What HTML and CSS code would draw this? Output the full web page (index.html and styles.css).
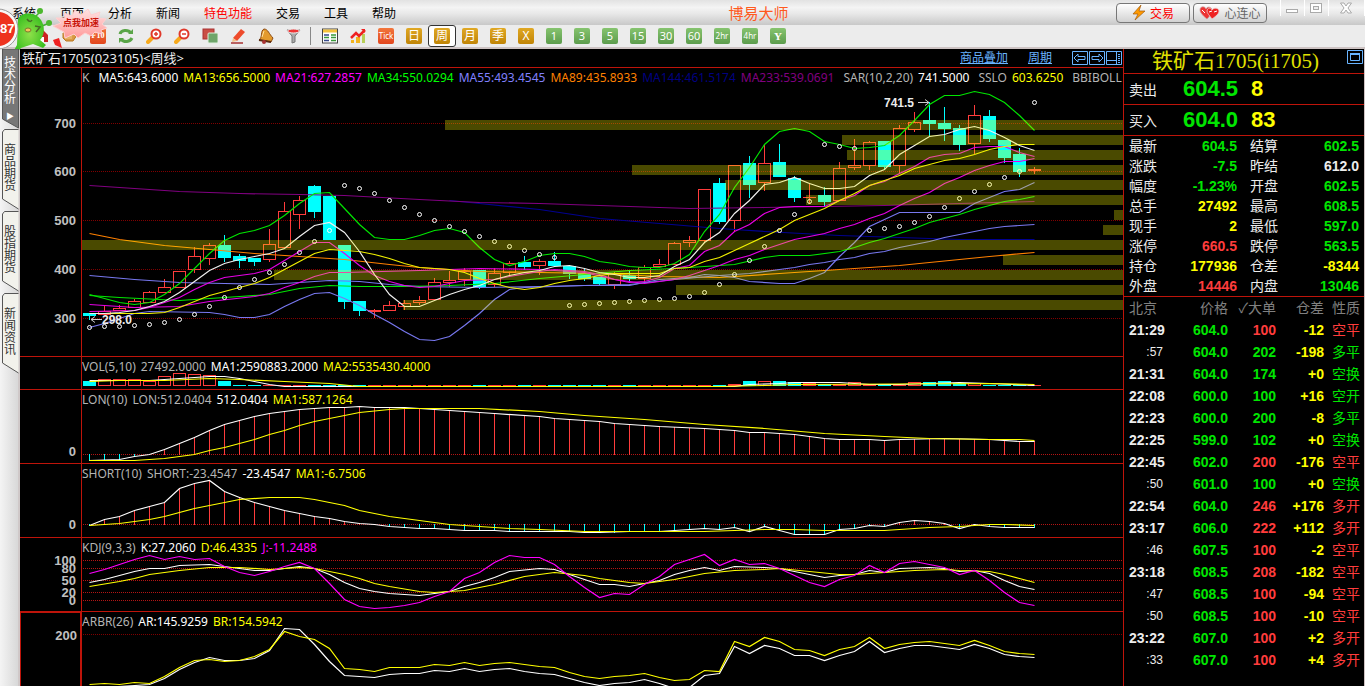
FILE: index.html
```
<!DOCTYPE html>
<html lang="zh-CN">
<head>
    <meta charset="UTF-8">
    <meta name="viewport" content="width=device-width, initial-scale=1.0">
    <title>博易大师</title>
    <link rel="stylesheet" href="styles.css">
</head>
<body>
    <header class="menu-bar">
        <nav class="menu">
            <button>系统</button>
            <button>页面</button>
            <button>分析</button>
            <button>新闻</button>
            <button class="hot">特色功能</button>
            <button>交易</button>
            <button>工具</button>
            <button>帮助</button>
        </nav>
        <h1 class="app-title">博易大师</h1>
        <div class="quick">
            <button class="quick-btn trade">
                <svg width="14" height="16" viewBox="0 0 14 16"><path d="M9 0L1 9l5 0L3 15l10-9H7z" fill="#ff9a00" stroke="#a05a10" stroke-width=".7"/></svg>
                交易
            </button>
            <button class="quick-btn">
                <svg width="21" height="14" viewBox="0 0 21 14"><path d="M8 13C3 9 1 6 1 4c0-4 5-4 6-1 1-3 6-2 6 1 0 3-2 6-5 9z" fill="#e33" stroke="#c99" stroke-width=".8"/><path d="M13 13c-3-4-5-6-5-8 0-3 4-4 5-1 2-3 7-2 7 1 0 3-3 5-7 8z" fill="#e22" stroke="#ecc" stroke-width=".8"/><path d="M3 4l3 3M10 6l3-1M15 6l3-1" stroke="#fff" fill="none"/></svg>
                心连心
            </button>
        </div>
        <div class="window-btns">
            <button aria-label="最小化"><svg width="12" height="12"><rect x=".5" y="7.500" width="11" height="3" fill="#fff" stroke="#aaa"/></svg></button>
            <button aria-label="还原"><svg width="12" height="12"><rect x=".5" y="1.500" width="11" height="9" fill="#fff" stroke="#aaa"/><rect x="3.500" y="4.500" width="5" height="3" fill="#eee" stroke="#aaa"/></svg></button>
            <button class="close" aria-label="关闭"><svg width="12" height="12"><path d="M.5 1h3.500L6 4l2-3h3.500L8 6l3.500 5H8L6 8l-2 3H.5L4 6z" fill="#fff" stroke="#aaa"/></svg></button>
        </div>
    </header>

    <div class="toolbar">
        <button aria-label="首页"><svg width="16" height="16"><path d="M1 7l7-6 6 6v7H3z" fill="#c22"/><path d="M6 9h4v5H6z" fill="#fff"/></svg></button>
        <button aria-label="返回"><svg width="16" height="16"><path d="M1 5h9V2l5 5-4 6H4l-3-3z" fill="#d99a45" stroke="#b9771e"/><path d="M2 8h8M3 10h7" stroke="#f3c887"/></svg></button>
        <button aria-label="F10"><span class="tile red serif">F10</span></button>
        <button aria-label="刷新"><svg width="16" height="16"><path d="M2 6c1-4 8-5 11-1" fill="none" stroke="#5aa548" stroke-width="3"/><path d="M10 6h5V1zM6 10H1v5z" fill="#5aa548"/><path d="M3 11c3 4 9 3 11-1" fill="none" stroke="#5aa548" stroke-width="3"/></svg></button>
        <button aria-label="放大"><svg width="16" height="16"><path d="M2 14l5-5" stroke="#f7a91c" stroke-width="4" stroke-linecap="round"/><circle cx="10" cy="6" r="4.500" fill="#fff" stroke="#e0392b" stroke-width="2"/><path d="M8 6h4M10 4v4" stroke="#e0392b" stroke-width="1.500"/></svg></button>
        <button aria-label="缩小"><svg width="16" height="16"><path d="M2 14l5-5" stroke="#f7a91c" stroke-width="4" stroke-linecap="round"/><circle cx="10" cy="6" r="4.500" fill="#fff" stroke="#e0392b" stroke-width="2"/><path d="M8 6h4" stroke="#e0392b" stroke-width="1.500"/></svg></button>
        <button aria-label="叠加"><svg width="16" height="16"><rect x="1" y="1" width="11" height="10" fill="#c94f45" stroke="#a33"/><rect x="6" y="5" width="10" height="10" rx="1" fill="#6fa56a" stroke="#dfeedd"/></svg></button>
        <button aria-label="画线"><svg width="16" height="16"><path d="M3 10l8-9 4 3-8 9z" fill="#ee4b2b"/><path d="M3 10l4 3-5 1z" fill="#f3c08a"/><path d="M1 15h12" stroke="#a33" stroke-width="1.500"/></svg></button>
        <button aria-label="预警"><svg width="16" height="16"><path d="M6 1c4 0 5 5 9 9l-2 4L1 12c4-3 1-9 5-11z" fill="#e39a2d" stroke="#8c4a12"/><path d="M1 12l12 2" stroke="#5a2a10" stroke-width="2"/><circle cx="6" cy="14" r="2" fill="#a33"/><path d="M6 3c-1 2-1 4-2 6" stroke="#ffe2a0" fill="none"/></svg></button>
        <button aria-label="筛选"><svg width="16" height="16"><path d="M1 2h13l-5 6v6l-3 1V8z" fill="#aaa" stroke="#777"/><ellipse cx="7.500" cy="3" rx="6" ry="2" fill="#e33" stroke="#eee"/></svg></button>
        <span class="divider"></span>
        <button aria-label="报价"><svg width="16" height="16"><rect x=".5" y="1" width="15" height="14" fill="#fff" stroke="#444"/><path d="M1 3h14" stroke="#f5c33b" stroke-width="3"/><path d="M2 7h5M2 12.500h5" stroke="#384a8c" stroke-width="1.500"/><path d="M9 7h5M9 12.500h5M2 9.500h5M9 9.500h5" stroke="#3a9a3a" stroke-width="1.500"/></svg></button>
        <button aria-label="走势"><svg width="16" height="16"><path d="M1 15V12h3v3zM6 15V9h4v6z" fill="#f2b31d"/><path d="M12 15V6h3v9z" fill="#b8cf58"/><path d="M1 10l5-5 3 3 6-6" fill="none" stroke="#e22" stroke-width="2.500"/><path d="M11 1h4v4z" fill="#e22"/></svg></button>
        <button><span class="tile red">Tick</span></button>
        <button><span class="tile gold">日</span></button>
        <button class="active"><span class="tile gold">周</span></button>
        <button><span class="tile gold">月</span></button>
        <button><span class="tile gold">季</span></button>
        <button><span class="tile gold">X</span></button>
        <button><span class="tile green">1</span></button>
        <button><span class="tile green">3</span></button>
        <button><span class="tile green">5</span></button>
        <button><span class="tile green">15</span></button>
        <button><span class="tile green">30</span></button>
        <button><span class="tile green">60</span></button>
        <button><span class="tile green small">2hr</span></button>
        <button><span class="tile green small">4hr</span></button>
        <button><span class="tile green serif">Y</span></button>
    </div>

    <!-- floating booster widget -->
    <div class="booster">
        <svg width="112" height="58">
            <defs>
                <linearGradient id="pink" x1="0" y1="0" x2="0" y2="1"><stop offset="0" stop-color="#ffe4e4"/><stop offset="1" stop-color="#ff9a9a"/></linearGradient>
                <radialGradient id="lime"><stop offset="0" stop-color="#8fe04a"/><stop offset="1" stop-color="#3cc021"/></radialGradient>
            </defs>
            <path d="M53 40l6-2 3 10-7-3z" fill="#e22"/>
            <path d="M35 17l4-4M42 26l5-2" stroke="#4a3" stroke-width="1.500"/>
            <circle cx="40" cy="11" r="3" fill="#4cb82e"/><circle cx="49" cy="23" r="3" fill="#4cb82e"/>
            <path d="M18 19c3-7 17-8 23 1 4 6 4 15-1 20l6 5-3 3-10-4-12 4-6 7-2-3 4-7z" fill="url(#lime)"/>
            <path d="M35 26l5 1-4 5M27 19c2 3 4 3 5 1" fill="none" stroke="#466b24" stroke-width="1.500"/>
            <ellipse cx="28" cy="30" rx="3" ry="2" fill="#f4c05a" stroke="#7a7a2c"/>
            <circle cx="-2" cy="29" r="20" fill="#f8f8f8" stroke="#999"/>
            <circle cx="-2" cy="29" r="17" fill="#ee321f"/>
            <path d="M53 26l8-3-5-5 9 0-1-5 8 3 3-6 6 5 7-6 3 6 9-3-2 6 8 1-4 5 5 4-6 2 1 4-7-2-4 4-6-3-7 5-4-4-9 4-1-6z" fill="url(#pink)" stroke="#ffd0d0"/>
        </svg>
        <span class="booster-score">87</span>
        <span class="booster-tip">点我加速</span>
    </div>

    <div class="workspace">
        <aside class="side-tabs">
            <button class="side-tab active"><svg viewBox="0 0 17 81"><path d="M.5 0V70L16.500 79V0z"/></svg><span>技术分析</span><i>▶</i></button>
            <button class="side-tab"><svg viewBox="0 0 17 81"><path d="M16.500 .5H2.500L.5 3V70L16.500 80"/></svg><span>商品期货</span></button>
            <button class="side-tab"><svg viewBox="0 0 17 81"><path d="M16.500 .5H2.500L.5 3V70L16.500 80"/></svg><span>股指期货</span></button>
            <button class="side-tab"><svg viewBox="0 0 17 81"><path d="M16.500 .5H2.500L.5 3V70L16.500 80"/></svg><span>新闻资讯</span></button>
        </aside>

        <main class="charts">
            <div class="chart-head">
                <h2>铁矿石1705(023105)&lt;周线&gt;</h2>
                <a href="#">商品叠加</a>
                <a href="#">周期</a>
                <div class="head-icons">
                    <button aria-label="左移"><svg width="16" height="14"><path d="M.5.5h15v13H.5zM2 7l4-4v2.500h7v3H6V11z"/></svg></button>
                    <button aria-label="右移"><svg width="16" height="14"><path d="M.5.5h15v13H.5zM14 7l-4-4v2.500H3v3h7V11z"/></svg></button>
                    <button aria-label="布局"><svg width="16" height="14"><path d="M.5.5h15v13H.5zM10.500 0v14M1 9.500h9M12 3.500h2M12 5.500h2M12 7.500h2M12 9.500h2M12 11.500h2"/></svg></button>
                </div>
            </div>

            <section class="pane pane-k">
                <svg class="axis" id="axis-k"></svg>
                <div class="plot">
                    <svg id="plot-k"></svg>
                    <p class="legend">
                        <span class="name">K</span>
                        <span class="white group">MA5:643.6000</span>
                        <span class="yellow">MA13:656.5000</span>
                        <span class="magenta">MA21:627.2857</span>
                        <span class="lime">MA34:550.0294</span>
                        <span class="blue">MA55:493.4545</span>
                        <span class="orange">MA89:435.8933</span>
                        <span class="navy">MA144:461.5174</span>
                        <span class="purple">MA233:539.0691</span>
                        <span class="name group">SAR(10,2,20)</span>
                        <span class="white">741.5000</span>
                        <span class="name group">SSLO</span>
                        <span class="yellow">603.6250</span>
                        <span class="name group">BBIBOLL</span>
                    </p>
                </div>
            </section>

            <section class="pane pane-vol">
                <svg class="axis"></svg>
                <div class="plot">
                    <svg id="plot-vol"></svg>
                    <p class="legend"><span class="name">VOL(5,10)</span> <span class="name">27492.0000</span> <span class="white">MA1:2590883.2000</span> <span class="yellow">MA2:5535430.4000</span></p>
                </div>
            </section>

            <section class="pane">
                <svg class="axis" id="axis-lon"></svg>
                <div class="plot">
                    <svg id="plot-lon"></svg>
                    <p class="legend"><span class="name">LON(10)</span> <span class="name">LON:512.0404</span> <span class="white">512.0404</span> <span class="yellow">MA1:587.1264</span></p>
                </div>
            </section>

            <section class="pane">
                <svg class="axis" id="axis-short"></svg>
                <div class="plot">
                    <svg id="plot-short"></svg>
                    <p class="legend"><span class="name">SHORT(10)</span> <span class="name">SHORT:-23.4547</span> <span class="white">-23.4547</span> <span class="yellow">MA1:-6.7506</span></p>
                </div>
            </section>

            <section class="pane">
                <svg class="axis" id="axis-kdj"></svg>
                <div class="plot">
                    <svg id="plot-kdj"></svg>
                    <p class="legend"><span class="name">KDJ(9,3,3)</span> <span class="white">K:27.2060</span> <span class="yellow">D:46.4335</span> <span class="magenta">J:-11.2488</span></p>
                </div>
            </section>

            <section class="pane pane-last selected">
                <svg class="axis" id="axis-arbr"></svg>
                <div class="plot">
                    <svg id="plot-arbr"></svg>
                    <p class="legend"><span class="name">ARBR(26)</span> <span class="white">AR:145.9259</span> <span class="yellow">BR:154.5942</span></p>
                </div>
            </section>
        </main>

        <aside class="quote">
            <div class="quote-head">
                <h2>铁矿石1705(i1705)</h2>
                <button aria-label="窗口"><svg width="16" height="14"><path d="M.5.5h15v13H.5zM3.500 4h9v6.500h-9z"/><path d="M3 4h10" stroke-width="2"/></svg></button>
            </div>
            <div class="deal"><span>卖出</span><b class="down">604.5</b><b class="yellow">8</b></div>
            <div class="deal"><span>买入</span><b class="down">604.0</b><b class="yellow">83</b></div>

            <table class="stats">
                <tr><th>最新</th><td class="down">604.5</td><th>结算</th><td class="down">602.5</td></tr>
                <tr><th>涨跌</th><td class="down">-7.5</td><th>昨结</th><td>612.0</td></tr>
                <tr><th>幅度</th><td class="down">-1.23%</td><th>开盘</th><td class="down">602.5</td></tr>
                <tr><th>总手</th><td class="yellow">27492</td><th>最高</th><td class="down">608.5</td></tr>
                <tr><th>现手</th><td class="yellow">2</td><th>最低</th><td class="down">597.0</td></tr>
                <tr><th>涨停</th><td class="up">660.5</td><th>跌停</th><td class="down">563.5</td></tr>
                <tr><th>持仓</th><td class="yellow">177936</td><th>仓差</th><td class="yellow">-8344</td></tr>
                <tr><th>外盘</th><td class="up">14446</td><th>内盘</th><td class="down">13046</td></tr>
            </table>

            <table class="ticks">
                <thead>
                    <tr><th>北京</th><th>价格</th><th>✓大单</th><th>仓差</th><th>性质</th></tr>
                </thead>
                <tbody>
                    <tr><td>21:29</td><td>604.0</td><td class="up">100</td><td>-12</td><td class="up">空平</td></tr>
                    <tr><td class="sec">:57</td><td>604.0</td><td class="down">202</td><td>-198</td><td class="down">多平</td></tr>
                    <tr><td>21:31</td><td>604.0</td><td class="down">174</td><td>+0</td><td class="down">空换</td></tr>
                    <tr><td>22:08</td><td>600.0</td><td class="down">100</td><td>+16</td><td class="down">空开</td></tr>
                    <tr><td>22:23</td><td>600.0</td><td class="down">200</td><td>-8</td><td class="down">多平</td></tr>
                    <tr><td>22:25</td><td>599.0</td><td class="down">102</td><td>+0</td><td class="down">空换</td></tr>
                    <tr><td>22:45</td><td>602.0</td><td class="up">200</td><td>-176</td><td class="up">空平</td></tr>
                    <tr><td class="sec">:50</td><td>601.0</td><td class="down">100</td><td>+0</td><td class="down">空换</td></tr>
                    <tr><td>22:54</td><td>604.0</td><td class="up">246</td><td>+176</td><td class="up">多开</td></tr>
                    <tr><td>23:17</td><td>606.0</td><td class="up">222</td><td>+112</td><td class="up">多开</td></tr>
                    <tr><td class="sec">:46</td><td>607.5</td><td class="up">100</td><td>-2</td><td class="up">空平</td></tr>
                    <tr><td>23:18</td><td>608.5</td><td class="up">208</td><td>-182</td><td class="up">空平</td></tr>
                    <tr><td class="sec">:47</td><td>608.5</td><td class="up">100</td><td>-94</td><td class="up">空平</td></tr>
                    <tr><td class="sec">:50</td><td>608.5</td><td class="up">100</td><td>-10</td><td class="up">空平</td></tr>
                    <tr><td>23:22</td><td>607.0</td><td class="up">100</td><td>+2</td><td class="up">多开</td></tr>
                    <tr><td class="sec">:33</td><td>607.0</td><td class="up">100</td><td>+4</td><td class="up">多开</td></tr>
                </tbody>
            </table>
        </aside>
    </div>

    <script src="charts.js"></script>
</body>
</html>
```
FILE: styles.css
```
* {
    box-sizing: border-box;
    margin: 0;
    padding: 0;
}
body {
    height: 100vh;
    display: flex;
    flex-direction: column;
    overflow: hidden;
    background-color: #000;
    color: #ececec;
    font-family: "Noto Sans", "Noto Sans CJK SC", sans-serif;
    font-size: 12px;
}
button {
    border: none;
    background: none;
    font: inherit;
    color: inherit;
    cursor: pointer;
}
svg {
    display: block;
}

/* Menu bar */
.menu-bar {
    height: 25px;
    flex: none;
    display: flex;
    align-items: center;
    background: linear-gradient(#e2e2e2, #f4f4f4 30%, #e8e8e8 55%, #c8c8c8);
    color: #000;
}
.menu {
    display: flex;
    gap: 24px;
    padding-left: 12px;
}
.menu button {
    font-family: "Noto Sans CJK SC", sans-serif;
    line-height: 24px;
}
.menu .hot {
    color: #f00;
}
.app-title {
    margin: 0 auto;
    padding-left: 5px;
    font-size: 15px;
    font-weight: normal;
    line-height: 24px;
    color: #ff5a1e;
}
.quick {
    display: flex;
    gap: 3px;
}
.quick-btn {
    width: 74px;
    height: 20px;
    display: flex;
    align-items: center;
    justify-content: center;
    gap: 4px;
    border: 1px solid #777;
    border-radius: 4px;
    background: linear-gradient(#fff, #d2d2d2);
    color: #666;
    white-space: nowrap;
}
.quick-btn.trade {
    color: #f00;
}
.window-btns {
    display: flex;
    align-self: stretch;
    padding-left: 13px;
}
.window-btns button {
    width: 24px;
    height: 16px;
    display: flex;
    align-items: center;
    justify-content: center;
    border-left: 1px solid #fff;
}
.window-btns .close {
    width: 37px;
    border-right: 1px solid #fff;
}

/* Toolbar */
.toolbar {
    height: 24px;
    flex: none;
    display: flex;
    padding-left: 28px;
    background-color: #ececec;
    border-bottom: 2px solid #cdc3c3;
}
.toolbar button {
    width: 28px;
    height: 22px;
    display: flex;
    align-items: center;
    justify-content: center;
}
.toolbar .active {
    background-color: #fff;
    border: 1px solid #333;
    border-radius: 3px;
}
.divider {
    width: 8px;
    height: 18px;
    margin-top: 2px;
    background: linear-gradient(#888, #888) 2px 0 / 1px 100% no-repeat;
}
.tile {
    width: 16px;
    height: 16px;
    border-radius: 2px;
    font-size: 11px;
    line-height: 16px;
    text-align: center;
    color: #fff;
    white-space: nowrap;
}
.tile.red {
    background: linear-gradient(#f2763c, #e2461e);
    font-size: 8px;
}
.tile.gold {
    background: linear-gradient(#e0a824, #c08406);
    font-size: 12px;
}
.tile.green {
    background: linear-gradient(#86c46f, #5c9c4c);
}
.tile.small {
    font-size: 8px;
}
.tile.serif {
    font-family: "Liberation Serif", serif;
    font-weight: bold;
}

/* Floating booster */
.booster {
    position: absolute;
    top: 0;
    left: 0;
}
.booster-score {
    position: absolute;
    top: 21px;
    left: 0;
    font: bold 13px/16px "Liberation Sans", sans-serif;
    color: #fff;
}
.booster-tip {
    position: absolute;
    top: 15px;
    left: 63px;
    font-size: 9px;
    font-weight: bold;
    line-height: 16px;
    color: #c8140a;
    white-space: nowrap;
}

/* Workspace */
.workspace {
    flex: 1;
    min-height: 0;
    display: flex;
}
.side-tabs {
    width: 20px;
    flex: none;
    padding-left: 2px;
    background: linear-gradient(90deg, #f4f4f4, #d8d8d8);
    border-right: 2px solid #cfc8c8;
}
.side-tab {
    position: relative;
    width: 16px;
    height: 82px;
    display: flex;
    flex-direction: column;
    align-items: center;
    justify-content: center;
    color: #333;
}
.side-tab svg {
    position: absolute;
    top: 0;
    left: 0;
    width: 17px;
    height: 81px;
    fill: #f2f2ec;
    stroke: #555;
}
.side-tab span {
    position: relative;
    width: 12px;
    line-height: 12px;
    padding-bottom: 6px;
    font-family: "Noto Sans CJK SC", sans-serif;
}
.side-tab i {
    position: relative;
    font-size: 8px;
    line-height: 12px;
    font-style: normal;
}
.side-tab.active {
    height: 80px;
    color: #fff;
}
.side-tab.active svg {
    fill: #777;
}

/* Charts */
.charts {
    flex: 1;
    min-width: 0;
    display: flex;
    flex-direction: column;
    border-right: 1px solid #be140a;
}
.chart-head {
    height: 19px;
    flex: none;
    display: flex;
    align-items: center;
    gap: 20px;
    padding: 0 1px 0 2px;
    border-bottom: 1px solid #be140a;
}
.chart-head h2 {
    margin-right: auto;
    font-size: 13px;
    font-weight: normal;
    line-height: 18px;
}
.chart-head a {
    color: #69b4ff;
    line-height: 18px;
}
.head-icons {
    display: flex;
    gap: 1px;
}
.head-icons svg, .quote-head svg {
    fill: none;
    stroke: #69b4ff;
}
.pane {
    height: 74px;
    flex: none;
    display: flex;
    border-bottom: 1px solid #be140a;
}
.pane-k {
    height: 289px;
}
.pane-vol {
    height: 33px;
}
.pane-last {
    flex: 1;
    min-height: 0;
    border-bottom: none;
}
.axis {
    width: 62px;
    height: 100%;
    flex: none;
    border-right: 1px solid #be140a;
}
.selected .axis {
    border-left: 1px solid #be140a;
    border-right-width: 2px;
    border-top: 1px solid #be140a;
}
.axis text {
    font: bold 13px "Liberation Sans", sans-serif;
    fill: #c0c0c0;
    text-anchor: end;
}
.plot {
    position: relative;
    flex: 1;
    min-width: 0;
    overflow: hidden;
}
.plot svg {
    width: 100%;
    height: 100%;
}
.plot text {
    font: bold 12px "Liberation Sans", sans-serif;
    fill: #ececec;
}
.legend {
    position: absolute;
    top: 0;
    left: 0;
    display: flex;
    gap: 5px;
    line-height: 20px;
    white-space: nowrap;
}
.legend .group {
    margin-left: 4px;
}
.name { color: #b4b4b4; }
.white { color: #fff; }
.yellow { color: #ff0; }
.magenta { color: #f0f; }
.lime { color: #0f0; }
.blue { color: #8080ff; }
.orange { color: #ff8000; }
.navy { color: #000080; }
.purple { color: #800080; }
.up { color: #ff3c3c; }
.down { color: #00e600; }

/* Quote panel */
.quote {
    width: 241px;
    flex: none;
    border-right: 1px solid #cfc3c3;
}
.quote-head {
    height: 25px;
    display: flex;
    align-items: center;
    padding-right: 1px;
    border-bottom: 1px solid #be140a;
}
.quote-head h2 {
    flex: 1;
    font-family: "Liberation Serif", "Noto Sans CJK SC", serif;
    font-size: 21px;
    font-weight: normal;
    line-height: 24px;
    text-align: center;
    color: #e1e100;
}
.quote-head button {
    align-self: flex-start;
    padding-top: 1px;
}
.deal {
    height: 31px;
    display: grid;
    grid-template-columns: 54px 68px 1fr;
    align-items: center;
    padding-left: 5px;
    border-bottom: 1px solid #be140a;
    font-size: 14px;
}
.deal b {
    font: bold 22px "Liberation Sans", sans-serif;
}
table {
    width: 100%;
    border-collapse: collapse;
    table-layout: fixed;
}
th, td {
    font-size: 14px;
    text-align: right;
    white-space: nowrap;
}
th {
    font-weight: normal;
}
td {
    font-family: "Liberation Sans", "Noto Sans CJK SC", sans-serif;
    font-weight: bold;
}
.stats {
    border-bottom: 1px solid #be140a;
}
.stats tr {
    height: 20px;
}
.stats th, .stats td {
    line-height: 20px;
}
.stats th {
    width: 42px;
    text-align: left;
    padding-left: 5px;
}
.stats td:nth-child(2) {
    width: 71px;
}
.stats th:nth-child(3) {
    width: 48px;
    padding-left: 13px;
}
.stats td:last-child {
    padding-right: 5px;
}
.ticks th, .ticks td {
    height: 22px;
    line-height: 22px;
}
.ticks th {
    color: #808080;
}
.ticks th:first-child {
    width: 44px;
    padding-left: 5px;
    text-align: left;
}
.ticks td:first-child {
    padding-left: 5px;
    text-align: left;
}
.ticks th:nth-child(3), .ticks th:nth-child(4) {
    width: 48px;
}
.ticks th:last-child {
    width: 40px;
}
.ticks th:last-child, .ticks td:last-child {
    padding-right: 4px;
    font-weight: normal;
}
.ticks .sec:first-child {
    padding-right: 5px;
    text-align: right;
    font-size: 12px;
    font-weight: normal;
}
.ticks td:nth-child(2) {
    color: #00e600;
}
.ticks td:nth-child(4) {
    color: #ff0;
}
```
FILE: charts.js
```
const NS = 'http://www.w3.org/2000/svg';
const STEP = 15;
const FIRST = 7;

function add(parent, tag, attrs, text) {
    const el = document.createElementNS(NS, tag);
    for (const key in attrs) el.setAttribute(key, attrs[key]);
    if (text) el.textContent = text;
    parent.appendChild(el);
    return el;
}

function centerX(i) {
    return FIRST + i * STEP;
}

// "10 12 5:30" -> index 0 = 10, index 1 = 12, index 5 = 30
function parse(str) {
    let i = -1;
    return str.trim().split(/\s+/).map(item => {
        const pair = item.split(':');
        i = pair.length > 1 ? +pair[0] : i + 1;
        return [i, +pair[pair.length - 1]];
    });
}

// values between the given points, one for each bar
function fill(points) {
    const out = [];
    for (let n = 0; n < points.length - 1; n++) {
        const [a, va] = points[n];
        const [b, vb] = points[n + 1];
        for (let i = a; i <= b; i++) out[i] = va + (vb - va) * (i - a) / (b - a);
    }
    return out;
}

// series values have three units to a pixel, top is the pane's offset
function pane(id, top) {
    const svg = document.getElementById('plot-' + id);
    const axis = document.getElementById('axis-' + id);
    const y = v => Math.round(v / 3) - top;
    return {
        svg,
        y,
        grid(v, label, color) {
            add(svg, 'line', { x1: 1, x2: '100%', y1: y(v) + 0.5, y2: y(v) + 0.5, stroke: color || '#b41414', 'stroke-dasharray': '1 1' });
            if (label) add(axis, 'text', { x: 56, y: y(v) + 5 }, label);
        },
        line(color, str) {
            const pts = parse(str).map(([i, v]) => (centerX(i) + 0.5) + ',' + (y(v) + 0.5)).join(' ');
            add(svg, 'polyline', { points: pts, fill: 'none', stroke: color, 'stroke-width': 1.2 });
        },
        sticks(zero, str) {
            fill(parse(str)).forEach((v, i) => {
                const up = v < zero;
                const a = Math.min(y(v), y(zero));
                add(svg, 'rect', { x: centerX(i), y: a, width: 1, height: Math.abs(y(v) - y(zero)) + 1, fill: up ? '#ff3c3c' : '#0ff' });
            });
        }
    };
}

// [high, body top, body bottom, low], c = falling
const candles = [
    [245,245,248,252,'c'],[237,243,247,247],[237,240,243,243],[231,233,240,240],[223,224,235,235],[211,219,225,225],
    [203,203,220,220],[179,188,202,205],[175,177,191,197],[167,177,190,194,'c'],[186,188,193,200,'c'],[190,190,194,198,'c'],
    [161,176,192,194],[134,143,180,180],[128,132,147,161],[117,118,144,150,'c'],[128,128,172,172,'c'],[177,177,234,241,'c'],
    [233,233,243,248,'c'],[241,242,244,250],[233,237,243,243],[232,235,239,242],[228,232,235,237],[210,214,232,232],
    [203,212,215,219],[200,203,212,218],[202,202,219,221,'c'],[200,205,217,219],[193,195,205,208],[188,194,199,202,'c'],
    [191,193,198,207],[184,193,198,198,'c'],[198,198,206,211,'c'],[200,205,211,213,'c'],[209,209,216,217,'c'],[204,205,217,221],
    [202,207,211,213,'c'],[197,199,211,216],[191,196,199,199],[174,175,197,197],[168,172,175,179],[121,121,173,175],
    [110,115,154,156,'c'],[97,97,153,163],[88,95,117,130,'c'],[77,95,115,123],[76,94,109,109,'c'],[108,110,130,134,'c'],
    [115,129,130,136],[119,127,134,138,'c'],[94,100,133,133],[71,97,100,102],[73,74,98,102],[73,73,99,102,'c'],
    [57,60,98,105],[44,54,62,64],[34,52,56,68,'c'],[39,55,61,73,'c'],[57,60,77,83,'c'],[37,47,76,86],
    [42,48,71,74,'c'],[72,72,90,95,'c'],[80,86,104,109,'c'],[99,101,103,106]
];

function bar(svg, i, top, bottom, falling) {
    const x = centerX(i) - 6;
    const h = bottom - top;
    if (falling) {
        add(svg, 'rect', { x, y: top, width: 13, height: Math.max(h, 1), fill: '#0ff' });
    } else if (h < 3) {
        add(svg, 'rect', { x, y: top, width: 13, height: Math.max(h, 1), fill: '#ff3c3c' });
    } else {
        add(svg, 'rect', { x: x + 0.5, y: top + 0.5, width: 12, height: h - 1, fill: 'none', stroke: '#ff3c3c' });
    }
}

// K line
const k = pane('k', 2);
k.grid(172, '700', '#800000');
k.grid(316, '600', '#800000');
k.grid(463, '500', '#800000');
k.grid(610, '400', '#800000');
k.grid(757, '300', '#800000');

candles.forEach(([high, top, bottom, low, type], i) => {
    const color = type ? '#0ff' : '#ff3c3c';
    add(k.svg, 'rect', { x: centerX(i), y: high, width: 1, height: top - high, fill: color });
    add(k.svg, 'rect', { x: centerX(i), y: bottom, width: 1, height: low - bottom, fill: color });
    bar(k.svg, i, top, bottom, type);
});

k.line('#000090', '24:402 26:410 30:430 34:455 38:472 42:485 45:496 50:506 54:513 58:518 63:520');
k.line('#800080', '0:358 3:367 6:376 10:382 14:385 17:388 22:400 26:408 30:412 36:420 40:425 45:423 53:418 58:412 63:406');
k.line('#ff8000', '0:502 2:520 5:538 8:549 11:562 14:571 17:580 20:595 22:604 26:614 30:618 34:622 38:629 42:632 46:620 49:613 52:604 54:598 56:589 58:580 60:571 63:559');
k.line('#7878f0', '0:626 3:640 6:647 9:652 12:655 14:648 16:641 18:646 20:655 22:661 26:662 30:660 33:657 36:655 39:640 42:628 44:622 46:610 604 595 589 580 574 562 556 544 535 526 514 505 496 487 481 478 475');
k.line('#7878f0', '784 772 757 740 736 8:738 744 752 754 743 720 698 682 679 695 717 744 769 796 820 823 810 778 741 700 670 664 31:659 33:657 36:656 38:640 40:632 41:624 628 633 645 46:652 652 636 619 570 528 479 460 439 437 58:439 411 393 376 370 349');
k.line('#00e600', '0:686 2:692 6:703 8:697 10:690 12:684 14:667 16:658 18:661 21:661 24:658 27:650 30:636 33:625 36:612 39:606 41:601 43:594 45:574 46:567 48:566 50:556 51:544 529 517 502 487 469 457 445 430 418 406 400 391');
k.line('#00e600', '685 697 709 715 708 685 650 607 560 521 502 493 478 448 411 380 379 425 475 512 520 520 508 493 487 499 543 580 598 586 568 562 562 571 586 590 599 604 604 590 565 495 445 362 303 235 196 187 196 226 235 246 242 238 206 163 115 88 88 76 85 109 148 193');
k.line('#e600e6', '0:715 3:724 6:721 8:706 11:691 12:680 664 649 631 619 617 22:613 26:606 30:608 33:618 35:640 37:650 39:640 628 612 598 578 566 548 535 519 510 501 487 475 457 442 417 397 377 352 334 313 298 286 286 276');
k.line('#e600e6', '0:736 3:732 4:722 707 692 670 649 634 11:622 610 583 556 529 529 562 597 628 645 658 664 661 652 642 27:640 28:630 30:615 31:610 33:614 34:625 640 648 646 632 605 598 556 538 496 475 440 424 420 49:420 402 386 357 345 322 301 274 265 262 244 241 241 259 271');
k.line('#f0f000', '0:740 4:742 738 724 706 688 676 663 652 634 610 586 562 550 551 556 565 577 590 602 605 610 618 635 652 664 670 663 652 642 636 626 622 620 38:620 606 602 584 574 553 532 510 490 463 445 427 403 382 357 343 328 306 295 283 277 265 249 241 235 235');
k.line('#f0f0f0', '742 742 738 733 720 704 679 646 613 592 578 571 562 545 510 478 467 499 555 625 684 721 721 702 685 668 658 640 627 618 612 601 598 605 618 625 632 634 627 600 580 527 499 440 402 355 348 334 352 365 367 361 328 310 265 238 211 205 189 181 193 214 238 253');

// SAR dots
parse('784 781 781 778 775 769 760 745 721 694 664 640 619 595 559 526 493 358 367 382 403 424 445 463 481 496 511 526 541 553 565 574 718 715 712 709 706 703 700 697 691 679 655 625 583 541 493 445 406 235 241 247 493 487 481 469 451 424 397 376 355 334 316 109').forEach(([i, v]) => {
    add(k.svg, 'circle', { cx: centerX(i) + 0.5, cy: k.y(v) + 0.5, r: 2, fill: 'none', stroke: '#fff' });
});

// price distribution, [x, y] to the right edge
[[363,52],[760,67],[765,82],[550,97],[643,112],[724,127],[1032,142],[1021,157],[0,172],[921,187],[192,202],[594,217],[321,232]].forEach(([x, y]) => {
    add(k.svg, 'rect', { x, y, width: '100%', height: 10, fill: '#ff0', 'fill-opacity': 0.29 });
});

add(k.svg, 'path', { d: 'M836 34.500h11M843 31.500l4 3-4 3M9 251.500h11M13 248.500l-4 3 4 3', fill: 'none', stroke: '#ccc' });
add(k.svg, 'text', { x: 802, y: 39 }, '741.5');
add(k.svg, 'text', { x: 20, y: 256 }, '298.0');

// VOL
const vol = pane('vol', 2);
fill(parse('78 73 73 73 79 64 55 58 61 78 90 42:90 43:88 78 79 78 82 85 86 86 82 88 89 90 82 82 78 83 83 90 90 89 91')).forEach((v, i) => {
    bar(vol.svg, i, vol.y(v), 29, candles[i][4]);
});
vol.line('#fff', '0:76 4:76 6:70 8:64 64 70 78 86 92 94 42:94 92 86 46:84 82 50:82 52:86 54:88 56:85 58:82 60:83 63:91');
vol.line('#ff0', '0:79 2:76 5:74 8:70 10:71 13:77 16:85 18:94 42:94 45:91 47:86 60:85 63:88');

// LON
const lon = pane('lon', 35);
const lonData = '0:315 2:311 304 296 283 265 247 226 208 196 184 175 169 163 160 157 157 154 157 21:157 160 163 166 27:175 30:184 31:190 34:199 35:205 38:214 41:220 43:226 44:230 232 235 238 244 250 253 52:253 256 253 57:250 60:253 62:259 259';
lon.grid(298);
add(document.getElementById('axis-lon'), 'text', { x: 56, y: 66 }, '0');
lon.sticks(298, lonData);
lon.line('#fff', lonData);
lon.line('#ff0', '0:316 3:316 5:310 7:298 286 277 265 253 238 226 211 199 190 181 172 20:163 160 26:160 30:169 33:181 37:193 41:206 45:219 49:234 53:244 56:250 60:253 62:253 256');

// SHORT
const short = pane('short', 109);
const shortData = '511 493 484 466 454 442 400 385 376 409 427 442 454 466 475 484 490 499 505 508 514 517 520 520 25:526 27:526 529 32:529 532 532 36:529 38:529 526 523 520 523 517 529 514 526 538 538 538 523 520 511 514 502 496 499 505 520 508 514 517 63:517';
short.grid(508, '0');
short.sticks(508, shortData);
short.line('#fff', shortData);
short.line('#ff0', '0:511 2:505 4:493 5:484 7:460 451 10:433 12:427 14:427 433 17:451 466 20:484 22:496 24:508 26:514 28:520 30:523 33:529 41:529 43:526 45:523 47:523 49:526 53:526 56:517 58:513 60:508 508 63:511');

// KDJ
const kdj = pane('kdj', 183);
kdj.grid(616, '100');
kdj.grid(640, '80');
kdj.grid(676, '50');
kdj.grid(712, '20');
kdj.grid(736, '0');
kdj.line('#fff', '682 673 3:649 640 640 631 8:628 634 11:646 646 639 634 640 658 682 700 709 715 22:721 715 709 694 682 667 649 30:640 643 658 673 688 688 694 684 676 658 646 637 646 634 45:637 640 649 658 667 661 658 646 652 640 56:637 640 649 646 655 676 694 703');
kdj.line('#ff0', '0:694 2:679 670 658 6:646 8:637 10:637 12:643 14:637 638 17:658 670 685 694 22:709 711 25:706 27:688 29:664 31:652 33:661 670 36:682 683 39:673 41:655 43:646 45:641 640 48:649 50:658 658 53:652 55:646 57:643 646 60:649 658 670 682');
kdj.line('#f0f', '655 643 628 613 601 613 604 613 610 632 650 661 649 634 622 640 685 733 754 760 757 751 742 724 709 670 652 622 601 607 607 626 664 697 727 715 718 687 664 626 613 598 631 613 628 625 638 661 680 694 673 661 631 650 625 619 628 637 658 646 674 710 742 751');

// ARBR
const arbr = pane('arbr', 257);
arbr.grid(838, '200', '#800000');
arbr.line('#fff', '0:1000 3:991 988 970 943 922 907 916 916 910 886 820 823 868 919 961 964 967 958 955 955 946 949 940 949 943 940 949 955 958 970 982 991 985 982 973 985 1000 997 961 955 874 895 871 880 901 901 916 901 889 859 892 880 871 871 877 883 868 880 898 904 907');
arbr.line('#ff0', '988 985 988 982 985 964 937 916 913 919 916 904 883 829 844 853 880 940 943 949 937 22:937 928 931 922 931 925 922 30:934 937 952 964 970 964 961 955 967 976 973 946 949 859 874 847 859 883 886 901 883 874 847 880 868 862 859 865 871 856 871 889 895 898');
```
